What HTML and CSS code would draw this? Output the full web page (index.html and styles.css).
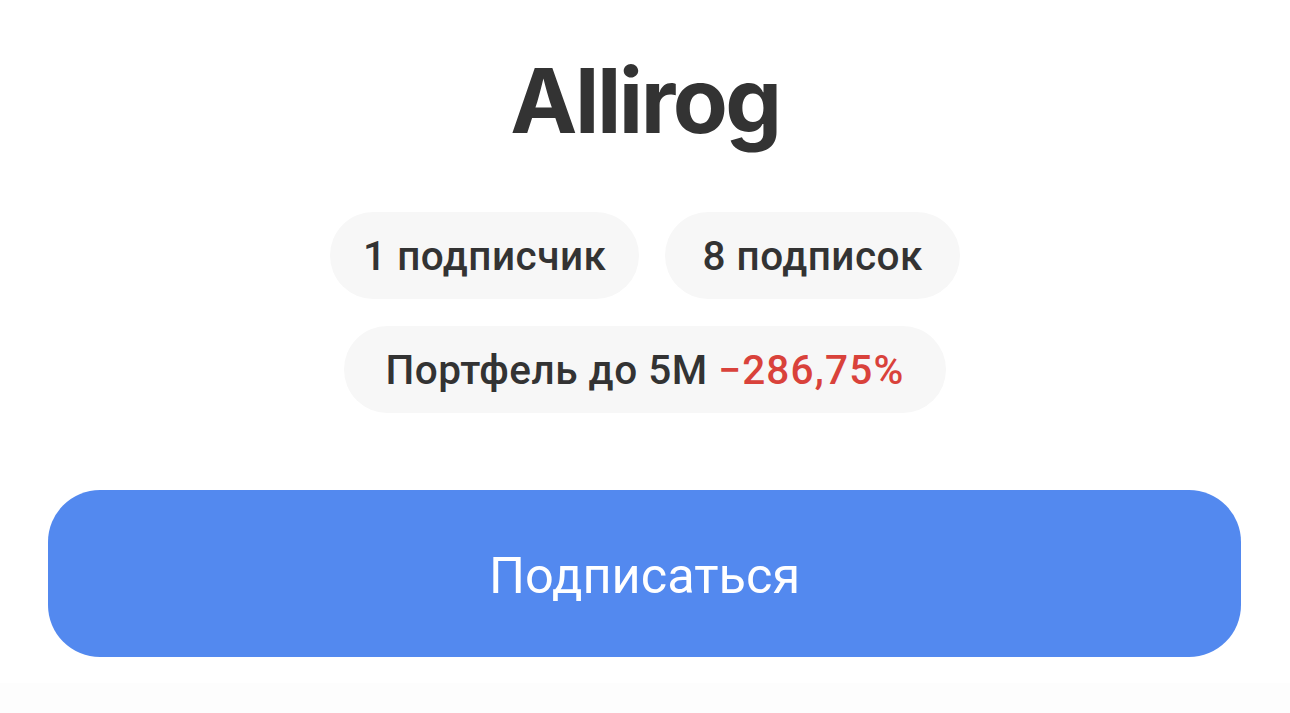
FILE: index.html
```html
<!DOCTYPE html>
<html lang="ru">
<head>
<meta charset="utf-8">
<title>Allirog</title>
<link rel="stylesheet" href="styles.css">
</head>
<body>
<main class="profile">
  <h1 class="profile-name">Allirog</h1>
  <div class="chip-row">
    <span class="chip chip--followers">1 подписчик</span>
    <span class="chip chip--following">8 подписок</span>
  </div>
  <div class="chip-row chip-row--second">
    <span class="chip chip--wide">Портфель до 5M <span class="loss">−286,75%</span></span>
  </div>
  <button class="subscribe-btn" type="button">Подписаться</button>
  <div class="bottom-strip"></div>
</main>
</body>
</html>
```

FILE: styles.css
```css
html, body {
  margin: 0;
  padding: 0;
  background: #ffffff;
}

.profile {
  display: flex;
  flex-direction: column;
  align-items: center;
  padding-top: 46px;
  font-family: Roboto, "Noto Sans", sans-serif;
  color: #333333;
}

.profile-name {
  margin: 0;
  font-family: Inter, "Noto Sans", sans-serif;
  font-weight: 700;
  font-size: 90px;
  line-height: 110px;
  letter-spacing: -2.5px;
  color: #333333;
}

.chip-row {
  display: flex;
  gap: 26px;
  margin-top: 56px;
}

.chip-row--second {
  margin-top: 27px;
}

.chip {
  display: flex;
  align-items: center;
  height: 87px;
  padding: 0 33px;
  border-radius: 44px;
  background: #f7f7f7;
  font-size: 40.5px;
  font-weight: 500;
  letter-spacing: 0.5px;
  white-space: pre;
}

.chip--following {
  padding: 0 37px;
}

.chip--wide {
  padding: 0 41px;
}

.loss {
  color: #d9423b;
  letter-spacing: 1.2px;
}

.subscribe-btn {
  margin-top: 77px;
  margin-left: 48px;
  align-self: flex-start;
  width: 1193px;
  height: 167px;
  border: 0;
  border-radius: 52px;
  background: #5389ef;
  color: #ffffff;
  font-family: Roboto, "Noto Sans", sans-serif;
  font-size: 50.5px;
  font-weight: 400;
  padding-top: 4px;
}

.bottom-strip {
  align-self: stretch;
  height: 30px;
  margin-top: 26px;
  background: #fdfdfd;
}
```
